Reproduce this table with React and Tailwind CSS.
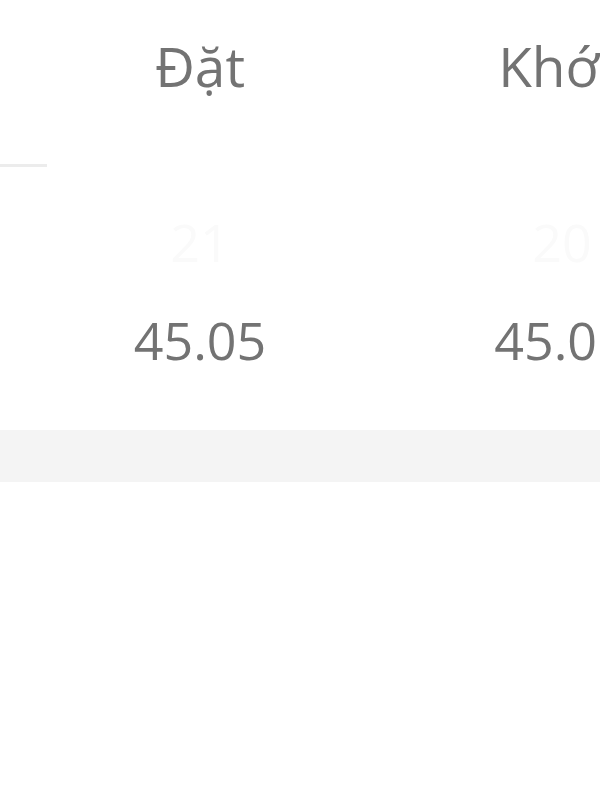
import React from 'react';

const columns = [
  { head: 'Đặt', faint: '21', value: '45.05' },
  { head: 'Khớp', faint: '20', value: '45.05' },
];

function Row({ field, className = '', cellClass = '' }) {
  return (
    <div className={`flex pl-[19px] ${className}`}>
      {columns.map((col, i) => (
        <div
          key={col.head}
          className={`w-[362px] shrink-0 text-center whitespace-nowrap ${i === 1 ? cellClass : ''}`}
        >
          {col[field]}
        </div>
      ))}
    </div>
  );
}

export default function App() {
  return (
    <div className="w-[600px] h-[800px] overflow-hidden bg-white text-[52px] leading-[52px] text-[#737373] font-['Open_Sans',sans-serif]">
      <Row field="head" className="pt-[38px] text-[55px] leading-[55px]" cellClass="pl-[7px]" />

      {/* divider stub */}
      <div className="mt-[71px] h-[3px] w-[47px] bg-[#ececec]" />

      <Row field="faint" className="mt-[49px] text-[#fafafa]" />

      <Row field="value" className="mt-[46px]" cellClass="pr-[3px]" />

      <div className="mt-[64px] h-[52px] bg-[#f4f4f4]" />
    </div>
  );
}
